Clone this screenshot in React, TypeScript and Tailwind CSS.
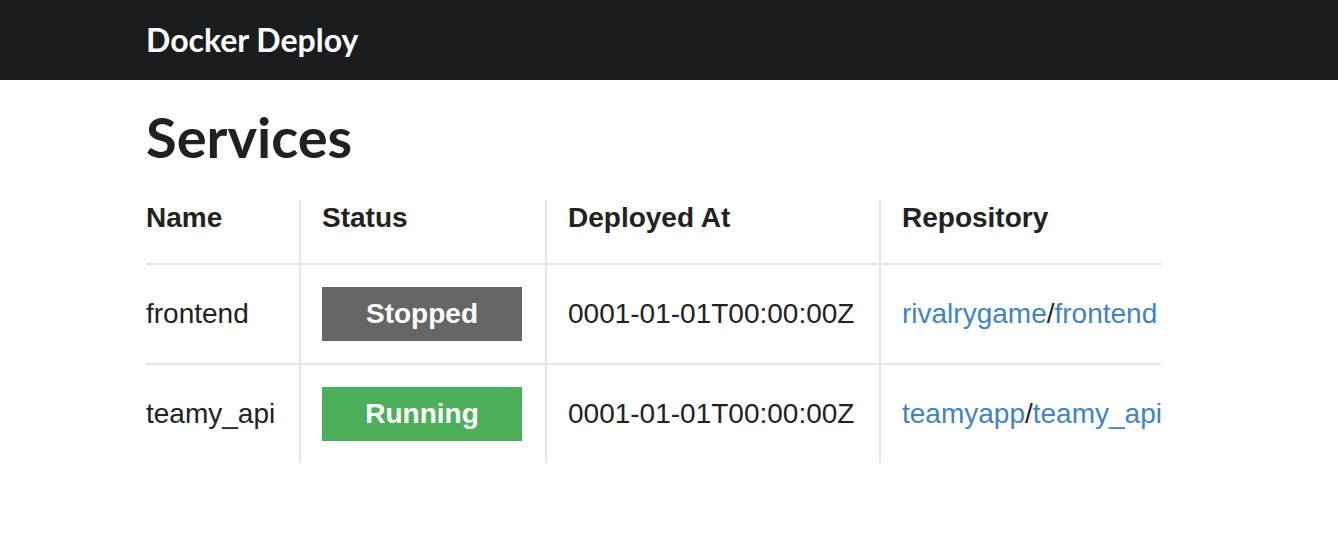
import React from "react";

type Service = {
  name: string;
  running: boolean;
  deployedAt: string;
  owner: string;
  repo: string;
};

const services: Service[] = [
  { name: "frontend", running: false, deployedAt: "0001-01-01T00:00:00Z", owner: "rivalrygame", repo: "frontend" },
  { name: "teamy_api", running: true, deployedAt: "0001-01-01T00:00:00Z", owner: "teamyapp", repo: "teamy_api" },
];

const lato = { fontFamily: "Lato, 'Noto Sans', sans-serif" };

function StatusBadge({ running }: { running: boolean }) {
  return (
    <div
      className={
        "w-[200px] h-[54px] flex items-center justify-center text-white font-bold text-[28px] " +
        (running ? "bg-[#4cb05a]" : "bg-[#666666]")
      }
    >
      {running ? "Running" : "Stopped"}
    </div>
  );
}

export default function App() {
  return (
    <div className="min-h-[554px] bg-white text-[#222222]" style={{ fontFamily: "'Liberation Sans', Arial, sans-serif" }}>
      {/* Top bar */}
      <header className="h-[80px] bg-[#1b1c1d]">
        <div className="w-[1046px] mx-auto h-full flex items-center">
          <span className="text-white font-bold text-[32px]" style={lato}>
            Docker Deploy
          </span>
        </div>
      </header>

      <main className="w-[1046px] mx-auto">
        <h1 className="text-[56px] font-bold leading-none mt-[29px] text-[#212121]" style={lato}>
          Services
        </h1>

        <div className="mt-[35px] grid grid-cols-[153px_246px_334px_282px]">
          {/* header */}
          {["Name", "Status", "Deployed At", "Repository"].map((h, i) => (
            <div
              key={h}
              className={
                "h-[65px] border-b-2 border-[#e6e6e6] font-bold text-[28px] leading-[28px] pt-[4px] " +
                (i === 0 ? "pl-0" : "pl-[21px] border-l-2")
              }
            >
              {h}
            </div>
          ))}

          {services.map((s, r) => {
            const row =
              "flex items-center text-[28px] " +
              (r === 0 ? "h-[100px] border-b-2 border-[#e6e6e6] " : "h-[98px] ");
            return (
              <React.Fragment key={s.name}>
                <div className={row + "pl-0"}>{s.name}</div>
                <div className={row + "pl-[21px] border-l-2 border-l-[#e6e6e6]"}>
                  <StatusBadge running={s.running} />
                </div>
                <div className={row + "pl-[21px] border-l-2 border-l-[#e6e6e6]"}>{s.deployedAt}</div>
                <div className={row + "pl-[21px] border-l-2 border-l-[#e6e6e6] whitespace-nowrap"}>
                  <a href="#" className="text-[#4183c4]">{s.owner}</a>/
                  <a href="#" className="text-[#4183c4]">{s.repo}</a>
                </div>
              </React.Fragment>
            );
          })}
        </div>
      </main>
    </div>
  );
}
